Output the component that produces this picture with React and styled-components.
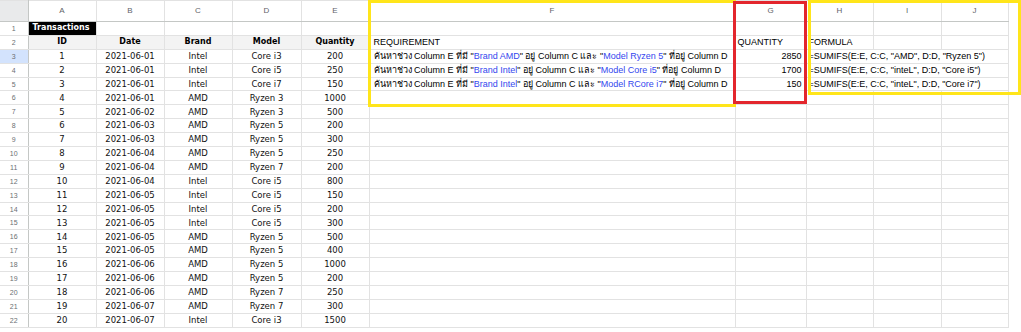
import React from "react";
import styled, { createGlobalStyle } from "styled-components";

const GlobalStyle = createGlobalStyle`
  html, body {
    margin: 0;
    padding: 0;
    background: #ffffff;
    overflow: hidden;
  }
`;

const COLS = [28, 68, 68, 68, 69, 68, 366, 71, 67, 68, 67];
const LETTERS = ["A", "B", "C", "D", "E", "F", "G", "H", "I", "J"];

const DATA = [
  [1, "2021-06-01", "Intel", "Core i3", 200],
  [2, "2021-06-01", "Intel", "Core i5", 250],
  [3, "2021-06-01", "Intel", "Core i7", 150],
  [4, "2021-06-01", "AMD", "Ryzen 3", 1000],
  [5, "2021-06-02", "AMD", "Ryzen 3", 500],
  [6, "2021-06-03", "AMD", "Ryzen 5", 200],
  [7, "2021-06-03", "AMD", "Ryzen 5", 300],
  [8, "2021-06-04", "AMD", "Ryzen 5", 250],
  [9, "2021-06-04", "AMD", "Ryzen 7", 200],
  [10, "2021-06-04", "Intel", "Core i5", 800],
  [11, "2021-06-05", "Intel", "Core i5", 150],
  [12, "2021-06-05", "Intel", "Core i5", 200],
  [13, "2021-06-05", "Intel", "Core i5", 300],
  [14, "2021-06-05", "AMD", "Ryzen 5", 500],
  [15, "2021-06-05", "AMD", "Ryzen 5", 400],
  [16, "2021-06-06", "AMD", "Ryzen 5", 1000],
  [17, "2021-06-06", "AMD", "Ryzen 5", 200],
  [18, "2021-06-06", "AMD", "Ryzen 7", 250],
  [19, "2021-06-07", "AMD", "Ryzen 7", 300],
  [20, "2021-06-07", "Intel", "Core i3", 1500],
];

const REQS = [
  { brand: "Brand AMD", model: "Model Ryzen 5", qty: 2850, formula: '=SUMIFS(E:E, C:C, "AMD", D:D, "Ryzen 5")' },
  { brand: "Brand Intel", model: "Model Core i5", qty: 1700, formula: '=SUMIFS(E:E, C:C, "inteL", D:D, "Core i5")' },
  { brand: "Brand Intel", model: "Model RCore i7", qty: 150, formula: '=SUMIFS(E:E, C:C, "inteL", D:D, "Core i7")' },
];

const Sheet = styled.div`
  position: relative;
  width: 1021px;
  height: 332px;
  overflow: hidden;
  background: #fff;
`;

const Grid = styled.table`
  border-collapse: collapse;
  table-layout: fixed;
  width: 1008px;
`;

const HeadRow = styled.tr`
  height: 21px;
`;

const Row = styled.tr`
  height: 13.9px;
`;

const Corner = styled.th`
  background: #e9eaeb;
  border-right: 1px solid #c4c7c5;
  border-bottom: 1px solid #c4c7c5;
  border-top: 1px solid #e2e2e2;
  padding: 0;
`;

const ColHead = styled.th`
  background: #fff;
  border-top: 1px solid #e2e2e2;
  border-right: 1px solid #e2e2e2;
  border-bottom: 1px solid #c4c7c5;
  font: 400 8px/1 "Liberation Sans", Arial, sans-serif;
  color: #5f6368;
  padding: 0;
  text-align: center;
`;

const RowHead = styled.td`
  background: ${(p) => (p.$active ? "#d3e3fd" : "#fff")};
  border-right: 1px solid #c4c7c5;
  border-bottom: 1px solid #e2e2e2;
  font: 400 7px/1 "Liberation Sans", Arial, sans-serif;
  color: #6b6f73;
  text-align: center;
  padding: 0;
`;

const Cell = styled.td`
  border-right: 1px solid #e2e2e2;
  border-bottom: 1px solid #e2e2e2;
  padding: 0 3px;
  white-space: nowrap;
  overflow: hidden;
  font: 400 8.5px/1 "DejaVu Sans", Verdana, sans-serif;
  color: #111;
  text-align: ${(p) => p.$align || "center"};
  background: ${(p) => (p.$head ? "#f3f3f3" : "#fff")};
  ${(p) => p.$head && "font-weight: 700; font-size: 8px; color: #000;"}
`;

const TitleCell = styled.td`
  background: #000;
  color: #fff;
  font: 700 8px/1 "DejaVu Sans", Verdana, sans-serif;
  padding: 0 4px;
  border-right: 1px solid #e2e2e2;
  border-bottom: 1px solid #e2e2e2;
  white-space: nowrap;
`;

const TextCell = styled.td`
  border-right: 1px solid #e2e2e2;
  border-bottom: 1px solid #e2e2e2;
  padding: 0 ${(p) => (p.$align === "right" ? "4px" : "2px")} 0 ${(p) => (p.$tight ? "2px" : "4px")};
  white-space: nowrap;
  overflow: visible;
  font: 400 9px/1 "Liberation Sans", Arial, "Noto Sans", "DejaVu Sans", sans-serif;
  color: #000;
  text-align: ${(p) => p.$align || "left"};
`;

const Blue = styled.span`
  color: #3447ee;
`;

const Highlight = styled.div`
  position: absolute;
  box-sizing: border-box;
  pointer-events: none;
  border: 3px solid ${(p) => p.$color};
  left: ${(p) => p.$x}px;
  top: ${(p) => p.$y}px;
  width: ${(p) => p.$w}px;
  height: ${(p) => p.$h}px;
`;

function Empty({ from, to }) {
  const out = [];
  for (let i = from; i < to; i++) out.push(<Cell key={i} />);
  return out;
}

export default function App() {
  return (
    <>
      <GlobalStyle />
      <Sheet>
        <Grid>
          <colgroup>
            {COLS.map((w, i) => (
              <col key={i} style={{ width: w }} />
            ))}
          </colgroup>
          <tbody>
            <HeadRow>
              <Corner />
              {LETTERS.map((l) => (
                <ColHead key={l}>{l}</ColHead>
              ))}
            </HeadRow>
            <Row>
              <RowHead>1</RowHead>
              <TitleCell>Transactions</TitleCell>
              <Empty from={0} to={9} />
            </Row>
            <Row>
              <RowHead>2</RowHead>
              <Cell $head>ID</Cell>
              <Cell $head>Date</Cell>
              <Cell $head>Brand</Cell>
              <Cell $head>Model</Cell>
              <Cell $head>Quantity</Cell>
              <TextCell>REQUIREMENT</TextCell>
              <TextCell $tight>QUANTITY</TextCell>
              <TextCell $tight>FORMULA</TextCell>
              <Cell />
              <Cell />
            </Row>
            {DATA.map((r, i) => {
              const req = REQS[i];
              return (
                <Row key={r[0]}>
                  <RowHead $active={i === 0}>{i + 3}</RowHead>
                  <Cell>{r[0]}</Cell>
                  <Cell>{r[1]}</Cell>
                  <Cell>{r[2]}</Cell>
                  <Cell>{r[3]}</Cell>
                  <Cell>{r[4]}</Cell>
                  {req ? (
                    <>
                      <TextCell>
                        ค้นหาช่วง Column E ที่มี "<Blue>{req.brand}</Blue>" อยู่ Column C และ "
                        <Blue>{req.model}</Blue>" ที่อยู่ Column D
                      </TextCell>
                      <TextCell $align="right">{req.qty}</TextCell>
                      <TextCell colSpan={3} $tight>
                        {req.formula}
                      </TextCell>
                    </>
                  ) : (
                    <Empty from={0} to={5} />
                  )}
                </Row>
              );
            })}
          </tbody>
        </Grid>
        <Highlight $color="#ffe51a" $x={368} $y={0} $w={368} $h={107} />
        <Highlight $color="#e3262d" $x={733} $y={1} $w={74} $h={103} />
        <Highlight $color="#ffe51a" $x={808} $y={0} $w={213} $h={95} />
      </Sheet>
    </>
  );
}
